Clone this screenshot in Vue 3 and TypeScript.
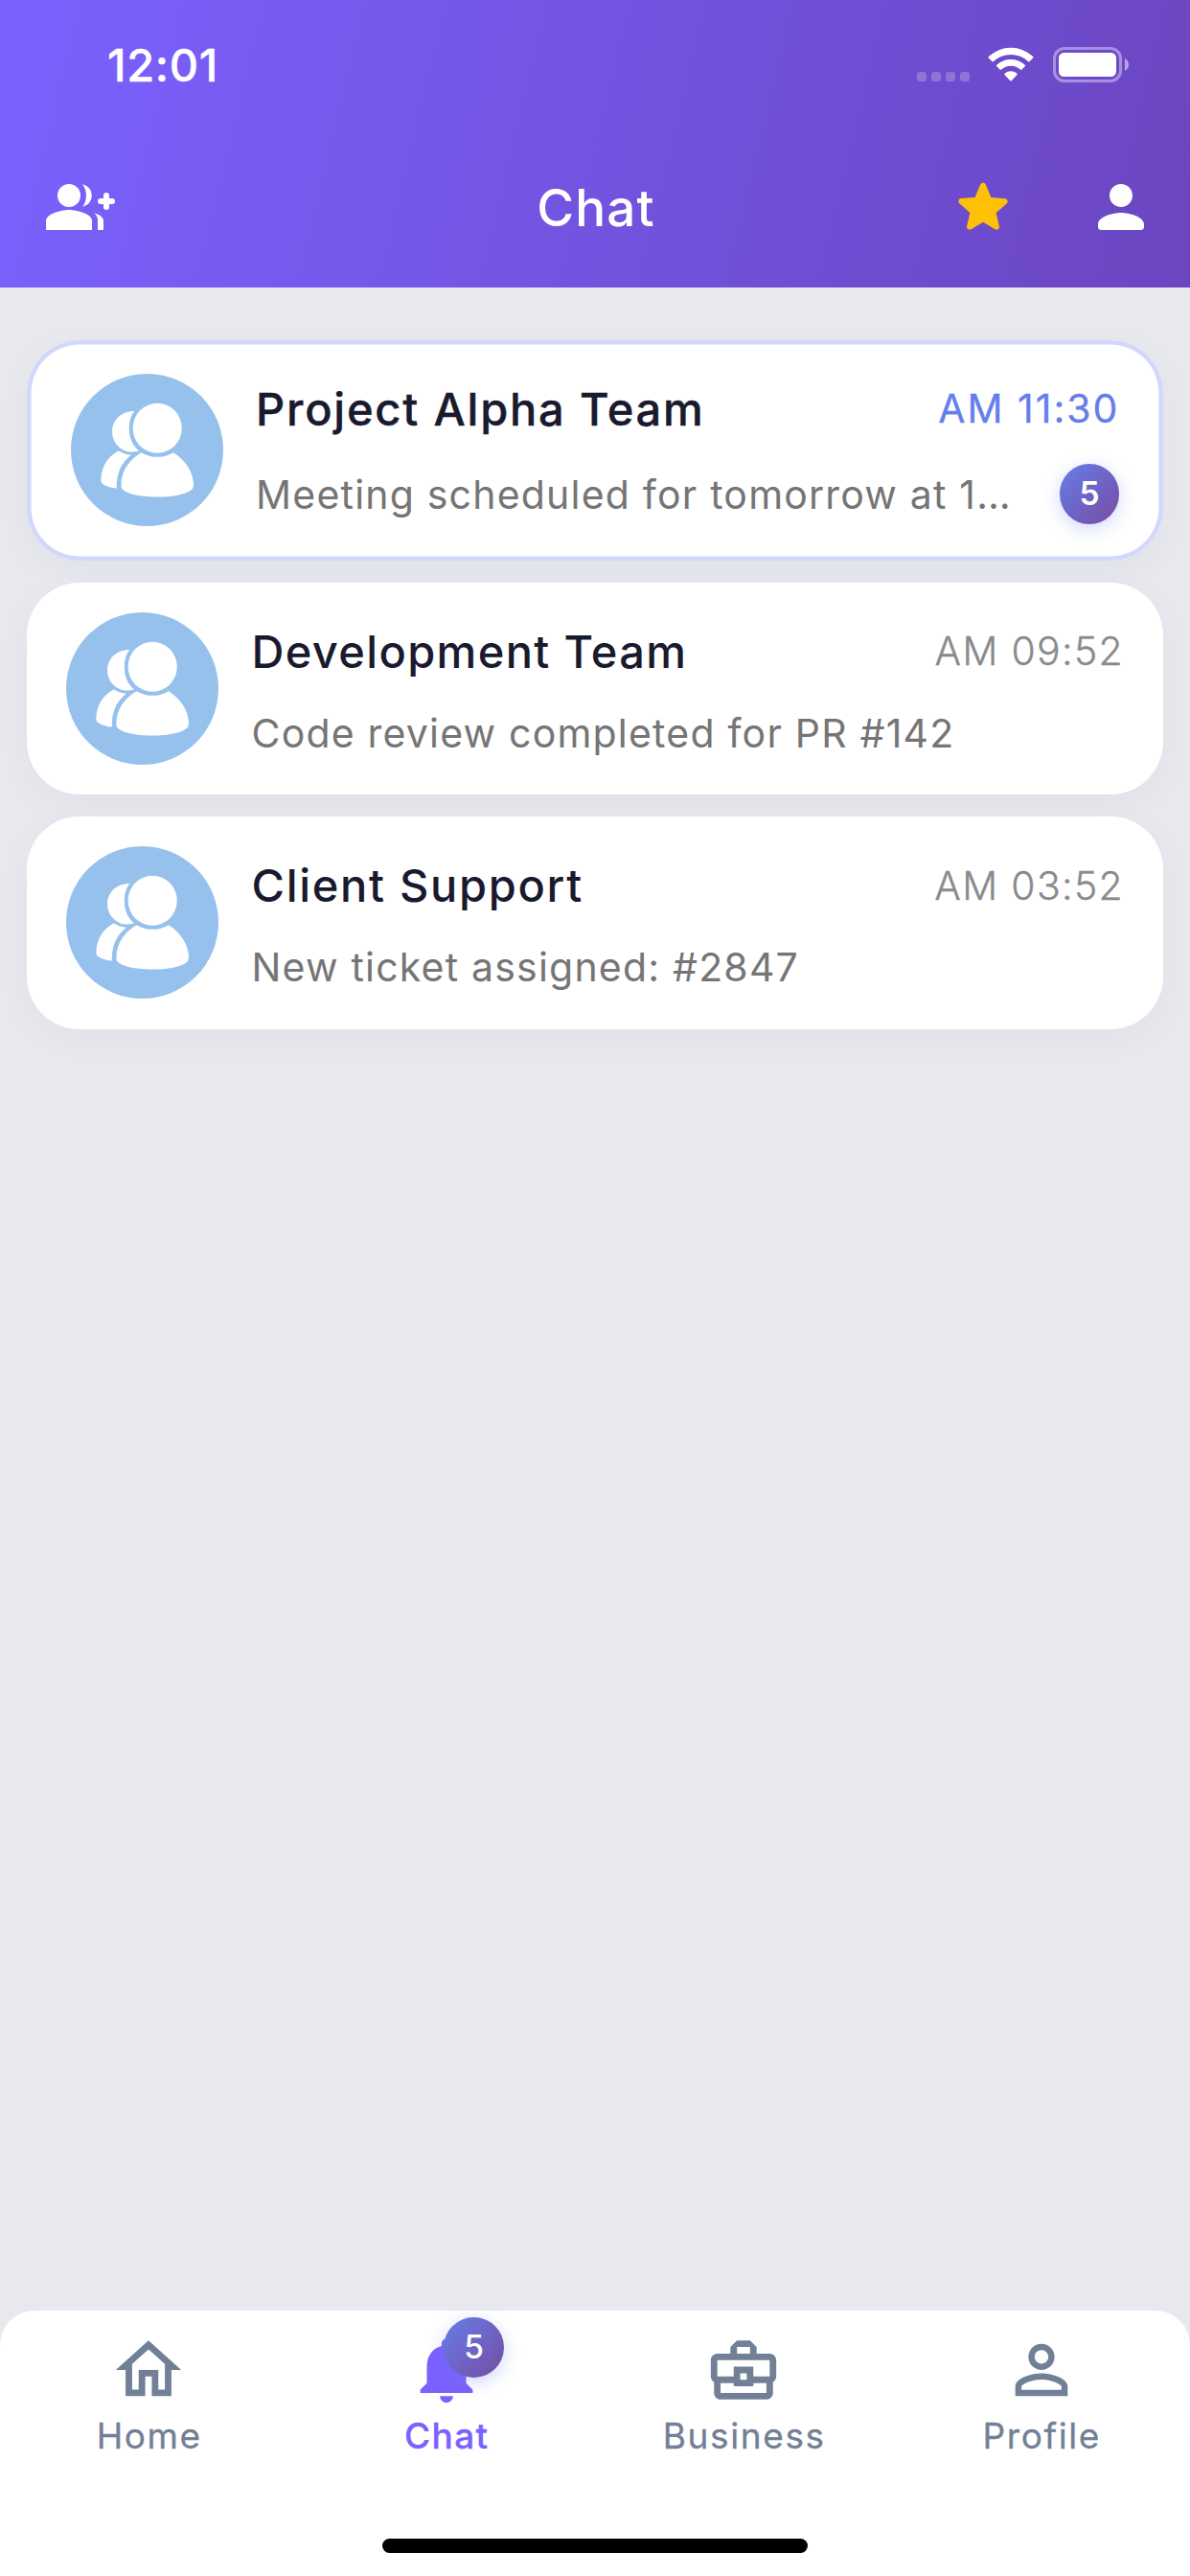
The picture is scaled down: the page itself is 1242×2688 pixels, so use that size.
<script setup lang="ts">
interface Conversation {
  name: string
  message: string
  time: string
  unread: number
  kind: string
}

interface Tab {
  label: string
  icon: string
  active: boolean
  badge: number
}

const conversations: Conversation[] = [
  { name: 'Project Alpha Team', message: 'Meeting scheduled for tomorrow at 1…', time: 'AM 11:30', unread: 5, kind: 'alpha' },
  { name: 'Development Team', message: 'Code review completed for PR #142', time: 'AM 09:52', unread: 0, kind: 'dev' },
  { name: 'Client Support', message: 'New ticket assigned: #2847', time: 'AM 03:52', unread: 0, kind: 'client' },
]

const tabs: Tab[] = [
  {
    label: 'Home',
    icon: 'M12 5.69l5 4.5V18h-2v-6H9v6H7v-7.81l5-4.5M12 3L2 12h3v8h6v-6h2v6h6v-8h3L12 3z',
    active: false,
    badge: 0,
  },
  {
    label: 'Chat',
    icon: 'M12 22c1.1 0 2-.9 2-2h-4c0 1.1.89 2 2 2zm6-6v-5c0-3.07-1.64-5.64-4.5-6.32V4c0-.83-.67-1.5-1.5-1.5s-1.5.67-1.5 1.5v.68C7.63 5.36 6 7.92 6 11v5l-2 2v1h16v-1l-2-2z',
    active: true,
    badge: 5,
  },
  {
    label: 'Business',
    icon: 'M20 7h-4V5l-2-2h-4L8 5v2H4c-1.1 0-2 .9-2 2v5c0 .75.4 1.38 1 1.73V19c0 1.11.89 2 2 2h14c1.11 0 2-.89 2-2v-3.28c.59-.35 1-.99 1-1.72V9c0-1.1-.9-2-2-2zM10 5h4v2h-4V5zM4 9h16v5h-5v-3H9v3H4V9zm9 6h-2v-2h2v2zm6 4H5v-3h4v1h6v-1h4v3z',
    active: false,
    badge: 0,
  },
  {
    label: 'Profile',
    icon: 'M12 5.9c1.16 0 2.1.94 2.1 2.1s-.94 2.1-2.1 2.1S9.9 9.16 9.9 8s.94-2.1 2.1-2.1m0 9c2.97 0 6.1 1.46 6.1 2.1v1.1H5.9V17c0-.64 3.13-2.1 6.1-2.1M12 4C9.79 4 8 5.79 8 8s1.79 4 4 4 4-1.79 4-4-1.79-4-4-4zm0 9c-2.67 0-8 1.34-8 4v3h16v-3c0-2.66-5.33-4-8-4z',
    active: false,
    badge: 0,
  },
]
</script>

<template>
  <div class="screen">
    <header class="header">
      <div class="status">
        <span class="clock">12:01</span>
        <div class="signals">
          <svg class="dots" viewBox="0 0 55 37" width="55" height="37">
            <rect v-for="n in 4" :key="n" :x="(n - 1) * 15" y="26" width="10" height="10" rx="3" fill="#fff" fill-opacity=".22" />
          </svg>
          <svg class="wifi" viewBox="0 0 48 37" width="48" height="37" fill="#fff">
            <path d="M.9 10.1Q.2 10.9 1 11.7L4.4 15.1Q5.2 15.9 6 15.1A26.5 26.5 0 0 1 42 15.1Q42.8 15.9 43.6 15.1L47 11.7Q47.8 10.9 47.1 10.1A33.5 33.5 0 0 0 .9 10.1Z" />
            <path d="M9.3 18.7Q8.5 19.5 9.3 20.3L12.5 23.5Q13.3 24.3 14.1 23.5A14.8 14.8 0 0 1 33.9 23.5Q34.7 24.3 35.5 23.5L38.7 20.3Q39.5 19.5 38.7 18.7A21.8 21.8 0 0 0 9.3 18.7Z" />
            <path d="M17.7 27.6Q16.9 28.4 17.7 29.2L23.3 35.2Q24 36 24.7 35.2L30.3 29.2Q31.1 28.4 30.3 27.6A9.8 9.8 0 0 0 17.7 27.6Z" />
          </svg>
          <svg class="battery" viewBox="0 0 80 37" width="80" height="37">
            <rect x="1.5" y="1.5" width="69" height="34" rx="10.5" fill="none" stroke="#fff" stroke-opacity=".4" stroke-width="3" />
            <rect x="6" y="6" width="60" height="25" rx="5.5" fill="#fff" />
            <path d="M75 12Q79 14.5 79 18.5T75 25Z" fill="#fff" fill-opacity=".5" />
          </svg>
        </div>
      </div>
      <div class="appbar">
        <div class="side">
          <svg class="add" viewBox="0 0 72 48" width="72" height="48" fill="#fff">
            <circle cx="24" cy="12" r="12" />
            <path d="M0 48V38.5C0 31 16 27 24 27S48 31 48 38.5V48Z" />
            <path d="M38 .2A12 12 0 0 1 38 23.8C43.3 17 43.3 7 38 .2Z" />
            <path d="M50.1 30.3C56 32 60 34.8 60 38.5V48H54V38.5C54 35.5 53 32.6 50.1 30.3Z" />
            <path d="M57 18H69M63 12V24" fill="none" stroke="#fff" stroke-width="6" stroke-linecap="round" />
          </svg>
        </div>
        <h1 class="title">Chat</h1>
        <div class="side actions">
          <svg viewBox="0 0 24 24" width="72" height="72" fill="#ffc107">
            <path d="M12 17.27l4.15 2.51c.76.46 1.69-.22 1.49-1.08l-1.1-4.72 3.67-3.18c.67-.58.31-1.68-.57-1.75l-4.83-.41-1.89-4.46c-.34-.81-1.5-.81-1.84 0L9.19 8.63l-4.83.41c-.88.07-1.24 1.17-.57 1.75l3.67 3.18-1.1 4.72c-.2.86.73 1.54 1.49 1.08L12 17.27z" />
          </svg>
          <svg viewBox="0 0 24 24" width="72" height="72" fill="#fff">
            <path d="M12 12c2.21 0 4-1.79 4-4s-1.79-4-4-4-4 1.79-4 4 1.79 4 4 4zm0 2c-2.67 0-8 1.34-8 4v1c0 .55.45 1 1 1h14c.55 0 1-.45 1-1v-1c0-2.66-5.33-4-8-4z" />
          </svg>
        </div>
      </div>
    </header>

    <main class="list">
      <article v-for="c in conversations" :key="c.name" class="card" :class="[c.kind, { unread: c.unread }]">
        <svg class="avatar" viewBox="0 0 476 476">
          <circle cx="238" cy="238" r="238" fill="#97c1ed" />
          <g fill="#fff">
            <ellipse cx="270" cy="170" rx="76.5" ry="78" />
            <path d="M220 246C183 268 157 303 157 347C157 353 157 357 161 361C178 379 230 385 270 385C312 385 362 378 380 359C383 355 383 350 383 343C381 305 357 268 320 246A96 96 0 0 1 220 246Z" />
            <path d="M198 117C158 117 129 144 129 181C129 217 158 244 190 244C198 244 206 243 213 241C193 226 182 200 182 170C182 150 187 131 198 117Z" />
            <path d="M149 241C117 257 94 290 94 332C94 338 96 342 101 345C113 353 128 357 143 358C142 315 155 280 188 254C174 253 161 248 149 241Z" />
          </g>
        </svg>
        <div class="body">
          <div class="row top">
            <h2 class="name">{{ c.name }}</h2>
            <time class="time">{{ c.time }}</time>
          </div>
          <div class="row bottom">
            <p class="message">{{ c.message }}</p>
            <span v-if="c.unread" class="badge">{{ c.unread }}</span>
          </div>
        </div>
      </article>
    </main>

    <nav class="nav">
      <div class="tabs">
        <div v-for="t in tabs" :key="t.label" class="tab" :class="{ active: t.active }">
          <div class="icon">
            <svg viewBox="0 0 24 24" width="82" height="82" fill="currentColor"><path :d="t.icon" /></svg>
            <span v-if="t.badge" class="badge pinned">{{ t.badge }}</span>
          </div>
          <span class="label">{{ t.label }}</span>
        </div>
      </div>
      <div class="indicator"></div>
    </nav>
  </div>
</template>

<style>
body {
  margin: 0;
}
</style>

<style scoped>
.screen {
  width: 1242px;
  height: 2688px;
  display: flex;
  flex-direction: column;
  background: #e8e9ee;
  font-family: Inter, "Liberation Sans", sans-serif;
  overflow: hidden;
}

.header {
  height: 300px;
  background: linear-gradient(103.58deg, #7b61ff, #6b46c1);
  color: #fff;
}

.status {
  height: 132px;
  box-sizing: border-box;
  display: flex;
  justify-content: space-between;
  align-items: flex-start;
  padding: 38px 63px 0 112px;
}

.clock {
  font-size: 47px;
  font-weight: 500;
  line-height: 60px;
  letter-spacing: 0.7px;
  -webkit-text-stroke: 0.4px currentColor;
}

.signals {
  display: flex;
  padding-top: 11px;
}

.wifi {
  margin-left: 19px;
}

.battery {
  margin-left: 20px;
}

.appbar {
  height: 168px;
  display: flex;
  align-items: center;
  padding: 0 36px 0 48px;
}

.side {
  flex: 1;
  display: flex;
}

.actions {
  justify-content: flex-end;
  gap: 72px;
}

.title {
  margin: 2px 0 0 -10px;
  font-size: 53px;
  font-weight: 500;
  line-height: 70px;
  letter-spacing: 1.2px;
}

.list {
  flex: 1;
  display: flex;
  flex-direction: column;
  gap: 23px;
  padding: 54.8px 27.6px 0;
}

.card {
  display: flex;
  align-items: center;
  gap: 34.5px;
  padding: 31.1px 41.4px;
  border-radius: 55px;
  background: #fff;
  box-shadow: 0 9px 36px rgba(0, 0, 0, 0.035);
}

.card.unread {
  padding: 35.7px 46px;
  box-shadow: inset 0 0 0 4.6px #d1d8fb, 0 9px 36px rgba(0, 0, 0, 0.035);
}

.avatar {
  flex: none;
  width: 159px;
  height: 159px;
}

.body {
  flex: 1;
  min-width: 0;
  margin-top: -1px;
  display: flex;
  flex-direction: column;
  gap: 23.5px;
}

.row {
  display: flex;
  justify-content: space-between;
  align-items: center;
}

.top {
  height: 69px;
}

.bottom {
  height: 54.3px;
}

.unread .bottom {
  height: 62.5px;
}

.name {
  margin: 0;
  color: #1a1a2e;
  font-size: 47px;
  font-weight: 500;
  letter-spacing: 1.35px;
  white-space: nowrap;
}

.client .name {
  letter-spacing: 1.7px;
}

.unread .name {
  letter-spacing: 1.8px;
  -webkit-text-stroke: 0.4px currentColor;
}

.time {
  color: #8a8a8a;
  font-size: 41px;
  font-weight: 300;
  letter-spacing: 1.3px;
  white-space: nowrap;
  -webkit-text-stroke: 0.3px currentColor;
}

.unread .time {
  color: #667eea;
  font-weight: 400;
  letter-spacing: 2px;
}

.message {
  margin: 0;
  color: #757575;
  font-size: 41px;
  font-weight: 400;
  letter-spacing: 1.2px;
  white-space: nowrap;
}

.badge {
  flex: none;
  width: 62.5px;
  height: 62.5px;
  border-radius: 50%;
  background: linear-gradient(135deg, #667eea, #764ba2);
  box-shadow: 0 5px 18px rgba(102, 126, 234, 0.3);
  color: #fff;
  font-size: 33.5px;
  font-weight: 600;
  line-height: 62.5px;
  text-align: center;
}

.nav {
  height: 277px;
  box-sizing: border-box;
  display: flex;
  flex-direction: column;
  justify-content: space-between;
  align-items: center;
  padding: 20.5px 0 24px;
  border-radius: 36px 36px 0 0;
  background: #fff;
}

.tabs {
  width: 100%;
  display: flex;
}

.tab {
  flex: 1;
  display: flex;
  flex-direction: column;
  align-items: center;
  color: #718096;
}

.tab.active {
  color: #7b61ff;
}

.icon {
  position: relative;
  width: 82px;
  height: 82px;
}

.icon svg {
  display: block;
}

.pinned {
  position: absolute;
  top: -13.5px;
  left: 38.5px;
  font-weight: 500;
}

.label {
  margin-top: 4px;
  padding-left: 1px;
  font-size: 37px;
  font-weight: 400;
  line-height: 48px;
  letter-spacing: 1.6px;
  -webkit-text-stroke: 0.3px currentColor;
}

.active .label {
  font-weight: 500;
  letter-spacing: 1.4px;
}

.indicator {
  width: 444px;
  height: 15px;
  border-radius: 7.5px;
  background: #000;
}
</style>
